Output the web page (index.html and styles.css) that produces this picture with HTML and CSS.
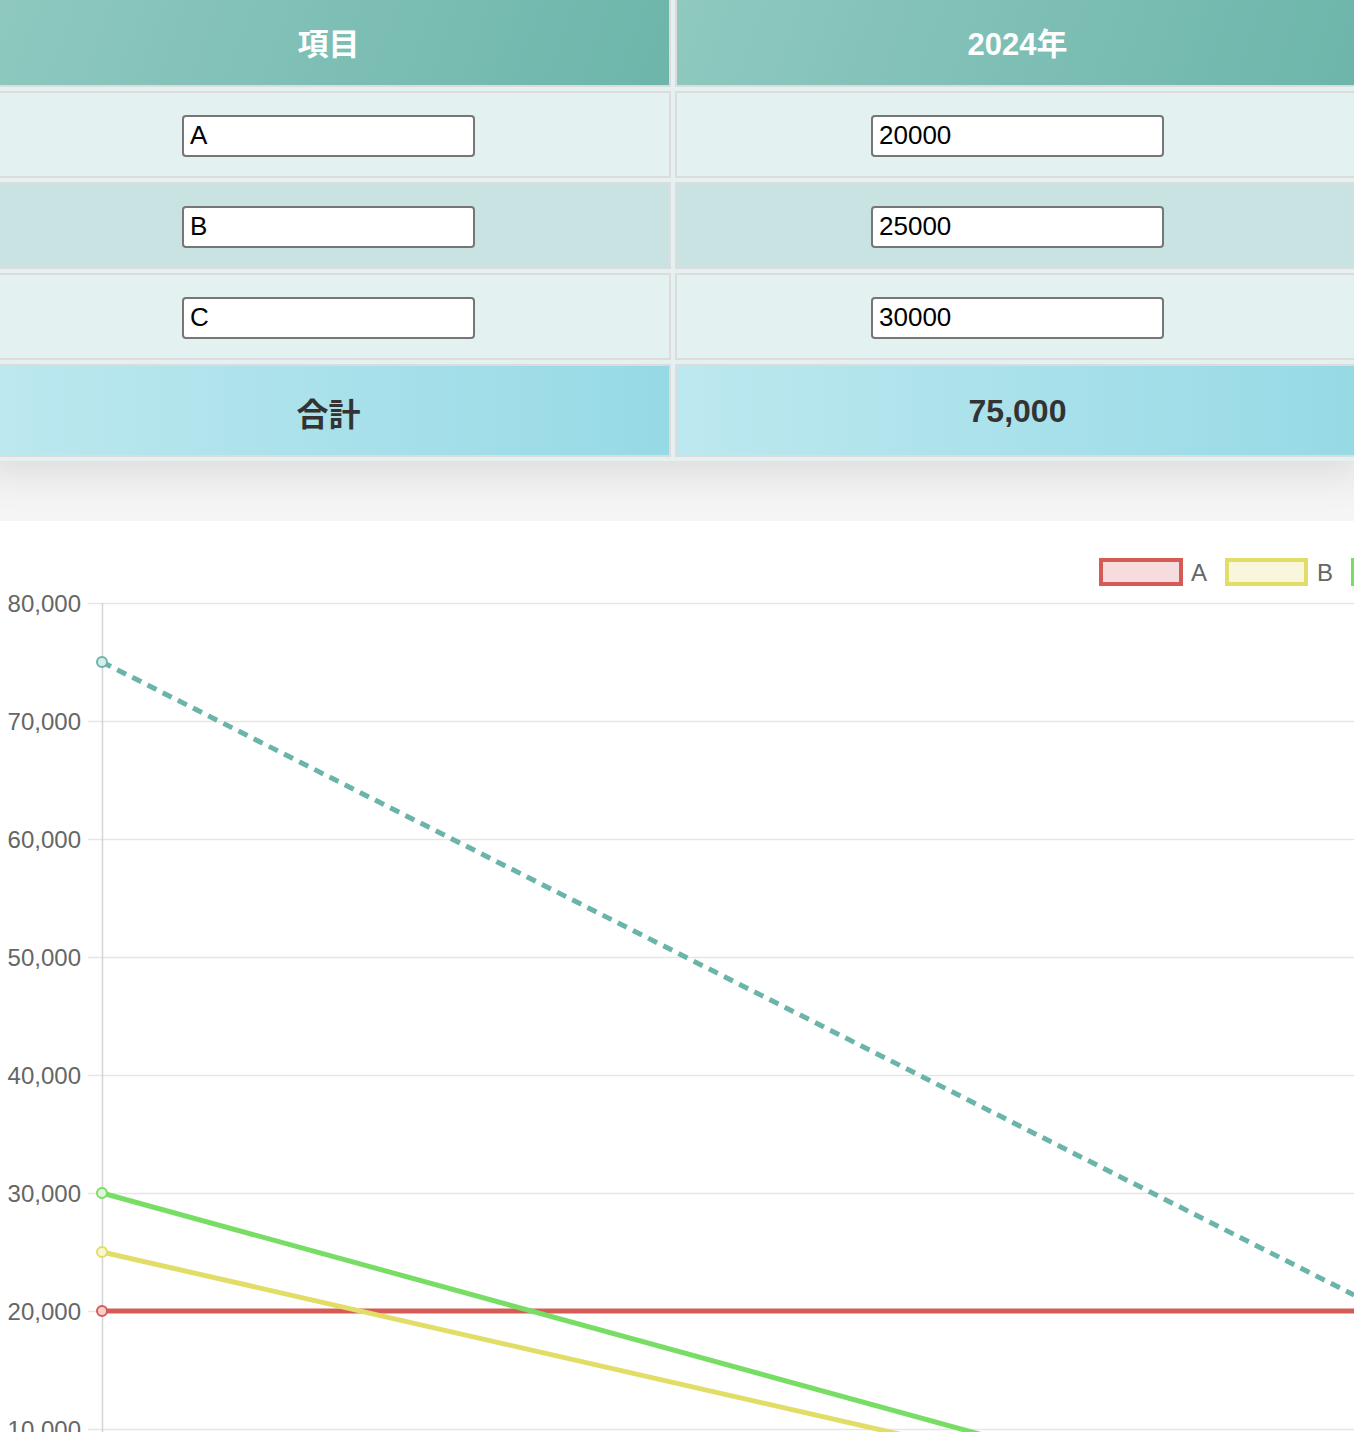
FILE: index.html
```html
<!DOCTYPE html>
<html lang="ja">
<head>
<meta charset="utf-8">
<title>集計</title>
<link rel="stylesheet" href="styles.css">
</head>
<body>
<div class="page">
  <div class="table-wrap">
    <table class="grid">
      <thead>
        <tr><th>項目</th><th>2024年</th></tr>
      </thead>
      <tbody>
        <tr class="odd"><td><input class="field" type="text" value="A"></td><td><input class="field" type="text" value="20000"></td></tr>
        <tr class="even"><td><input class="field" type="text" value="B"></td><td><input class="field" type="text" value="25000"></td></tr>
        <tr class="odd"><td><input class="field" type="text" value="C"></td><td><input class="field" type="text" value="30000"></td></tr>
        <tr class="total"><td>合計</td><td>75,000</td></tr>
      </tbody>
    </table>
  </div>
  <section class="chart">
    <svg class="chart-svg" width="1354" height="911" viewBox="0 521 1354 911" xmlns="http://www.w3.org/2000/svg">
      <g class="legend">
        <rect x="1101" y="560" width="80" height="24" fill="#f6dcdc" stroke="#d55c56" stroke-width="4"/>
        <text x="1191" y="581" class="lg">A</text>
        <rect x="1227" y="560" width="79" height="24" fill="#f8f7de" stroke="#e2dd66" stroke-width="4"/>
        <text x="1317" y="581" class="lg">B</text>
        <rect x="1353" y="560" width="79" height="24" fill="#e3f7df" stroke="#78dd64" stroke-width="4"/>
      </g>
      <g class="grid-lines" stroke="#e6e6e6" stroke-width="1.5">
        <line x1="88" y1="603.5" x2="1354" y2="603.5"/>
        <line x1="88" y1="721.5" x2="1354" y2="721.5"/>
        <line x1="88" y1="839.5" x2="1354" y2="839.5"/>
        <line x1="88" y1="957.5" x2="1354" y2="957.5"/>
        <line x1="88" y1="1075.5" x2="1354" y2="1075.5"/>
        <line x1="88" y1="1193.5" x2="1354" y2="1193.5"/>
        <line x1="88" y1="1311.5" x2="1354" y2="1311.5"/>
        <line x1="88" y1="1429.5" x2="1354" y2="1429.5"/>
      </g>
      <line x1="102.5" y1="603" x2="102.5" y2="1432" stroke="#d4d4d4" stroke-width="1.5"/>
      <g class="ticks">
        <text x="81" y="611.5" class="tk">80,000</text>
        <text x="81" y="729.5" class="tk">70,000</text>
        <text x="81" y="847.5" class="tk">60,000</text>
        <text x="81" y="965.5" class="tk">50,000</text>
        <text x="81" y="1083.5" class="tk">40,000</text>
        <text x="81" y="1201.5" class="tk">30,000</text>
        <text x="81" y="1319.5" class="tk">20,000</text>
        <text x="81" y="1437.5" class="tk">10,000</text>
      </g>
      <line x1="102" y1="1311" x2="1354" y2="1311" stroke="#d55c56" stroke-width="5"/>
      <line x1="102" y1="1252" x2="1354" y2="1538" stroke="#e2dd66" stroke-width="5"/>
      <line x1="102" y1="1193" x2="1354" y2="1537" stroke="#78dd64" stroke-width="5"/>
      <line x1="102" y1="662" x2="1354" y2="1295" stroke="#6ab4aa" stroke-width="5" stroke-dasharray="10 7"/>
      <circle cx="102" cy="1311" r="5" fill="#f3cfcd" stroke="#d55c56" stroke-width="2"/>
      <circle cx="102" cy="1252" r="5" fill="#f8f5d0" stroke="#e2dd66" stroke-width="2"/>
      <circle cx="102" cy="1193" r="5" fill="#dff5da" stroke="#78dd64" stroke-width="2"/>
      <circle cx="102" cy="662" r="5" fill="#d7ecea" stroke="#6ab4aa" stroke-width="2"/>
    </svg>
  </section>
</div>
</body>
</html>
```
FILE: styles.css
```css
html, body {
  margin: 0;
  padding: 0;
}
body {
  background: #f5f5f5;
  overflow: hidden;
  font-family: "Liberation Sans", "Noto Sans CJK JP", sans-serif;
}
.page {
  width: 1354px;
  overflow: hidden;
}
.table-wrap {
  margin: -6px 0 0 -18px;
  width: 1382px;
  box-shadow: 0 12px 40px rgba(0, 0, 0, 0.11);
}
.grid {
  width: 1382px;
  table-layout: fixed;
  border-collapse: separate;
  border-spacing: 4px;
  background: #e4f1f0;
}
.grid th,
.grid td {
  border: 2px solid #dcdcdc;
  padding: 0;
  text-align: center;
  vertical-align: middle;
}
.grid th {
  height: 82px;
  padding-bottom: 3px;
  background: linear-gradient(110deg, #8fc9c0 0%, #6db5aa 100%);
  color: #ffffff;
  font-size: 31px;
  font-weight: bold;
  font-family: "Liberation Sans", "Noto Sans CJK JP", sans-serif;
}
.grid td {
  height: 83px;
}
.odd td {
  background: #e3f1f0;
}
.even td {
  background: #c8e3e1;
}
.total td {
  height: 87px;
  padding-top: 2px;
  background: linear-gradient(90deg, #bde8ef 0%, #96dae6 100%);
  color: #333333;
  font-size: 32px;
  font-weight: bold;
}
.field {
  display: block;
  margin: 2px auto 0;
  width: 293px;
  height: 42px;
  box-sizing: border-box;
  border: 2px solid #767676;
  border-radius: 4px;
  padding: 0 6px;
  font-family: "Liberation Sans", sans-serif;
  font-size: 26px;
  color: #000;
  background: #fff;
}
.chart {
  margin-top: 60px;
  background: #ffffff;
}
.chart-svg {
  display: block;
}
.tk {
  font-family: "Liberation Sans", sans-serif;
  font-size: 24px;
  fill: #666666;
  text-anchor: end;
}
.lg {
  font-family: "Liberation Sans", sans-serif;
  font-size: 24px;
  fill: #666666;
}
```
